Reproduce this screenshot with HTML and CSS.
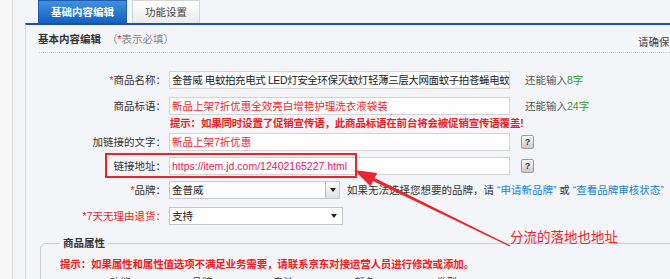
FILE: index.html
```html
<!DOCTYPE html>
<html lang="zh-CN">
<head>
    <meta charset="UTF-8">
    <title>基础内容编辑</title>
    <link rel="stylesheet" href="styles.css">
</head>
<body>
    <div class="page">
        <div class="tabs">
            <span class="tab tab-active">基础内容编辑</span>
            <span class="tab">功能设置</span>
        </div>

        <div class="panel">
            <div class="panel-head">
                <div class="panel-title"><b>基本内容编辑</b><span class="required-note">（<i>*</i>表示必填）</span></div>
                <div class="panel-tip">请确保商品信息真实有效</div>
            </div>

            <div class="form">
                <div class="row row-first">
                    <label class="row-label"><i>*</i>商品名称：</label>
                    <div class="field field-name">金普威 电蚊拍充电式 LED灯安全环保灭蚊灯轻薄三层大网面蚊子拍苍蝇电蚊</div>
                    <span class="count">还能输入<em>8字</em></span>
                </div>
                <div class="row row-tight">
                    <label class="row-label">商品标语：</label>
                    <div class="field field-red">新品上架7折优惠全效亮白增艳护理洗衣液袋装</div>
                    <span class="count">还能输入<em>24字</em></span>
                </div>
                <p class="hint">提示：如果同时设置了促销宣传语，此商品标语在前台将会被促销宣传语覆盖!</p>
                <div class="row row-3">
                    <label class="row-label">加链接的文字：</label>
                    <div class="field field-red">新品上架7折优惠</div>
                    <span class="help">?</span>
                </div>
                <div class="row">
                    <label class="row-label">链接地址：</label>
                    <div class="field field-url">https://item.jd.com/12402165227.html</div>
                    <span class="help">?</span>
                </div>
                <div class="row row-5">
                    <label class="row-label"><i>*</i>品牌：</label>
                    <div class="combo">
                        <span class="combo-text">金普威</span>
                        <span class="combo-btn"><span class="caret"></span></span>
                    </div>
                    <span class="brand-note">如果无法选择您想要的品牌，请 <a>“申请新品牌”</a> 或 <a>“查看品牌审核状态”</a></span>
                </div>
                <div class="row row-last">
                    <label class="row-label row-label-red">*7天无理由退货：</label>
                    <div class="select">
                        <span class="combo-text">支持</span>
                        <span class="caret"></span>
                    </div>
                </div>
            </div>

            <fieldset class="attrs">
                <legend>商品属性</legend>
                <p class="attrs-hint">提示：如果属性和属性值选项不满足业务需要，请联系京东对接运营人员进行修改或添加。</p>
                <div class="attrs-row">
                    <span>功能：</span><span>品牌：</span><span>电池：</span><span>颜色：</span><span>类型：</span>
                </div>
            </fieldset>
        </div>
    </div>

    <!-- 标注 -->
    <div class="callout-box"></div>
    <svg class="callout-arrow" width="670" height="279" viewBox="0 0 670 279">
        <polygon fill="#e8262b" points="510.3,245.4 374.6,178.1 377.2,173.0 354,170 370.4,186.2 373.0,181.1 509.7,246.6"/>
    </svg>
    <div class="callout-text">分流的落地也地址</div>
</body>
</html>
```

FILE: styles.css
```css
body {
    margin: 0;
    width: 670px;
    height: 279px;
    overflow: hidden;
    position: relative;
    background-color: #f7f7f7;
    font-family: "Liberation Sans", "Noto Sans CJK SC", sans-serif;
    font-size: 10.5px;
    line-height: 14px;
    color: #333;
}

i {
    font-style: normal;
    color: #e8262b;
}

.page {
    margin-left: 12px;
    border-left: 1px solid #dcdcdc;
    padding-left: 12px;
    height: 279px;
    background-color: #f4f5f9;
}

.tabs {
    display: flex;
    gap: 5px;
    height: 23px;
    padding-left: 13px;
}

.tab {
    width: 68px;
    height: 23px;
    box-sizing: border-box;
    border: 1px solid #d5d5d5;
    border-bottom: none;
    background: linear-gradient(#ffffff, #ebebeb);
    text-align: center;
    line-height: 22px;
    color: #444;
}

.tab-active {
    width: 89px;
    background: linear-gradient(#3f90e2, #1760bd);
    border-color: #1d5cb0;
    color: #fff;
    font-weight: bold;
}

.panel {
    border-top: 2px solid #1a4fb0;
    border-left: 1px solid #d8d8d8;
    height: 254px;
    overflow: hidden;
}

.panel-head {
    display: flex;
    justify-content: space-between;
    height: 28px;
    box-sizing: border-box;
    margin-left: 13px;
    padding-top: 7px;
    border-bottom: 1px dotted #c8c8c8;
}

.panel-title {
    margin-left: -1px;
}

.panel-title b {
    color: #333;
}

.required-note {
    margin-left: 6px;
    color: #888;
}

.panel-tip {
    width: 32px;
    padding-top: 3px;
    white-space: nowrap;
    color: #444;
}

.form {
    padding-top: 18px;
}

.row {
    display: flex;
    align-items: center;
    height: 18px;
    margin-bottom: 6px;
}

.row-first {
    margin-bottom: 8px;
}

.row-tight {
    margin-bottom: 0;
}

.row-5 {
    margin-bottom: 8px;
}

.row-last {
    margin-bottom: 0;
}

.row-label {
    flex: none;
    width: 140px;
    padding-right: 3px;
    text-align: right;
    color: #333;
}

.row-label-red {
    color: #e8262b;
}

.field {
    flex: none;
    width: 341px;
    height: 18px;
    box-sizing: border-box;
    border: 1px solid #d4d4d4;
    background-color: #fff;
    padding: 0 2px;
    line-height: 16px;
    white-space: nowrap;
    overflow: hidden;
    color: #222;
}

.field-name {
    letter-spacing: -0.4px;
}

.field-red {
    color: #ee1f2b;
}

.field-url {
    color: #e6205a;
}

.count {
    margin-left: 15px;
    color: #555;
}

.count em {
    font-style: normal;
    color: #3a9a20;
}

.help {
    margin-left: 11px;
    width: 13px;
    height: 14px;
    box-sizing: border-box;
    border: 1px solid #9a9a9a;
    border-radius: 2px;
    background: linear-gradient(#fbfbfb, #c9c9c9);
    text-align: center;
    line-height: 12px;
    font-size: 9px;
    font-weight: bold;
    color: #333;
}

.hint {
    margin: 2px 0 3px 144px;
    line-height: 13px;
    color: #f01c24;
    font-weight: bold;
    letter-spacing: -0.2px;
    white-space: nowrap;
}

.combo,
.select {
    display: flex;
    align-items: center;
    height: 18px;
    box-sizing: border-box;
    border: 1px solid #c9c9c9;
    background-color: #fff;
}

.combo {
    width: 171px;
}

.select {
    width: 174px;
    padding-right: 5px;
}

.combo-text {
    flex: 1;
    padding-left: 2px;
    color: #222;
}

.combo-btn {
    display: flex;
    align-items: center;
    justify-content: center;
    width: 13px;
    height: 16px;
    border-left: 1px solid #bdbdbd;
    background: linear-gradient(#fdfdfd, #e0e0e0);
}

.caret {
    width: 0;
    height: 0;
    border-left: 3px solid transparent;
    border-right: 3px solid transparent;
    border-top: 4px solid #222;
}

.brand-note {
    margin-left: 7px;
    white-space: nowrap;
    color: #333;
}

.brand-note a {
    color: #1a7fd9;
}

.attrs {
    margin: 11px -20px 0 14px;
    padding: 0 0 0 19px;
    border: 1px solid #cfcfcf;
    border-radius: 6px;
}

.attrs legend {
    padding: 0 3px;
    font-weight: bold;
    color: #333;
}

.attrs-hint {
    margin: 7px 0 0;
    color: #f01c24;
    font-weight: bold;
    letter-spacing: -0.15px;
    white-space: nowrap;
}

.attrs-row {
    display: flex;
    gap: 50px;
    margin: 4px 0 0 50px;
    color: #444;
}

.callout-box {
    position: absolute;
    left: 105px;
    top: 153px;
    width: 252px;
    height: 25px;
    box-sizing: border-box;
    border: 2px solid #e8262b;
}

.callout-arrow {
    position: absolute;
    left: 0;
    top: 0;
    pointer-events: none;
}

.callout-text {
    position: absolute;
    left: 510px;
    top: 231px;
    font-size: 13.5px;
    line-height: 14px;
    color: #e8262b;
    white-space: nowrap;
}
```
